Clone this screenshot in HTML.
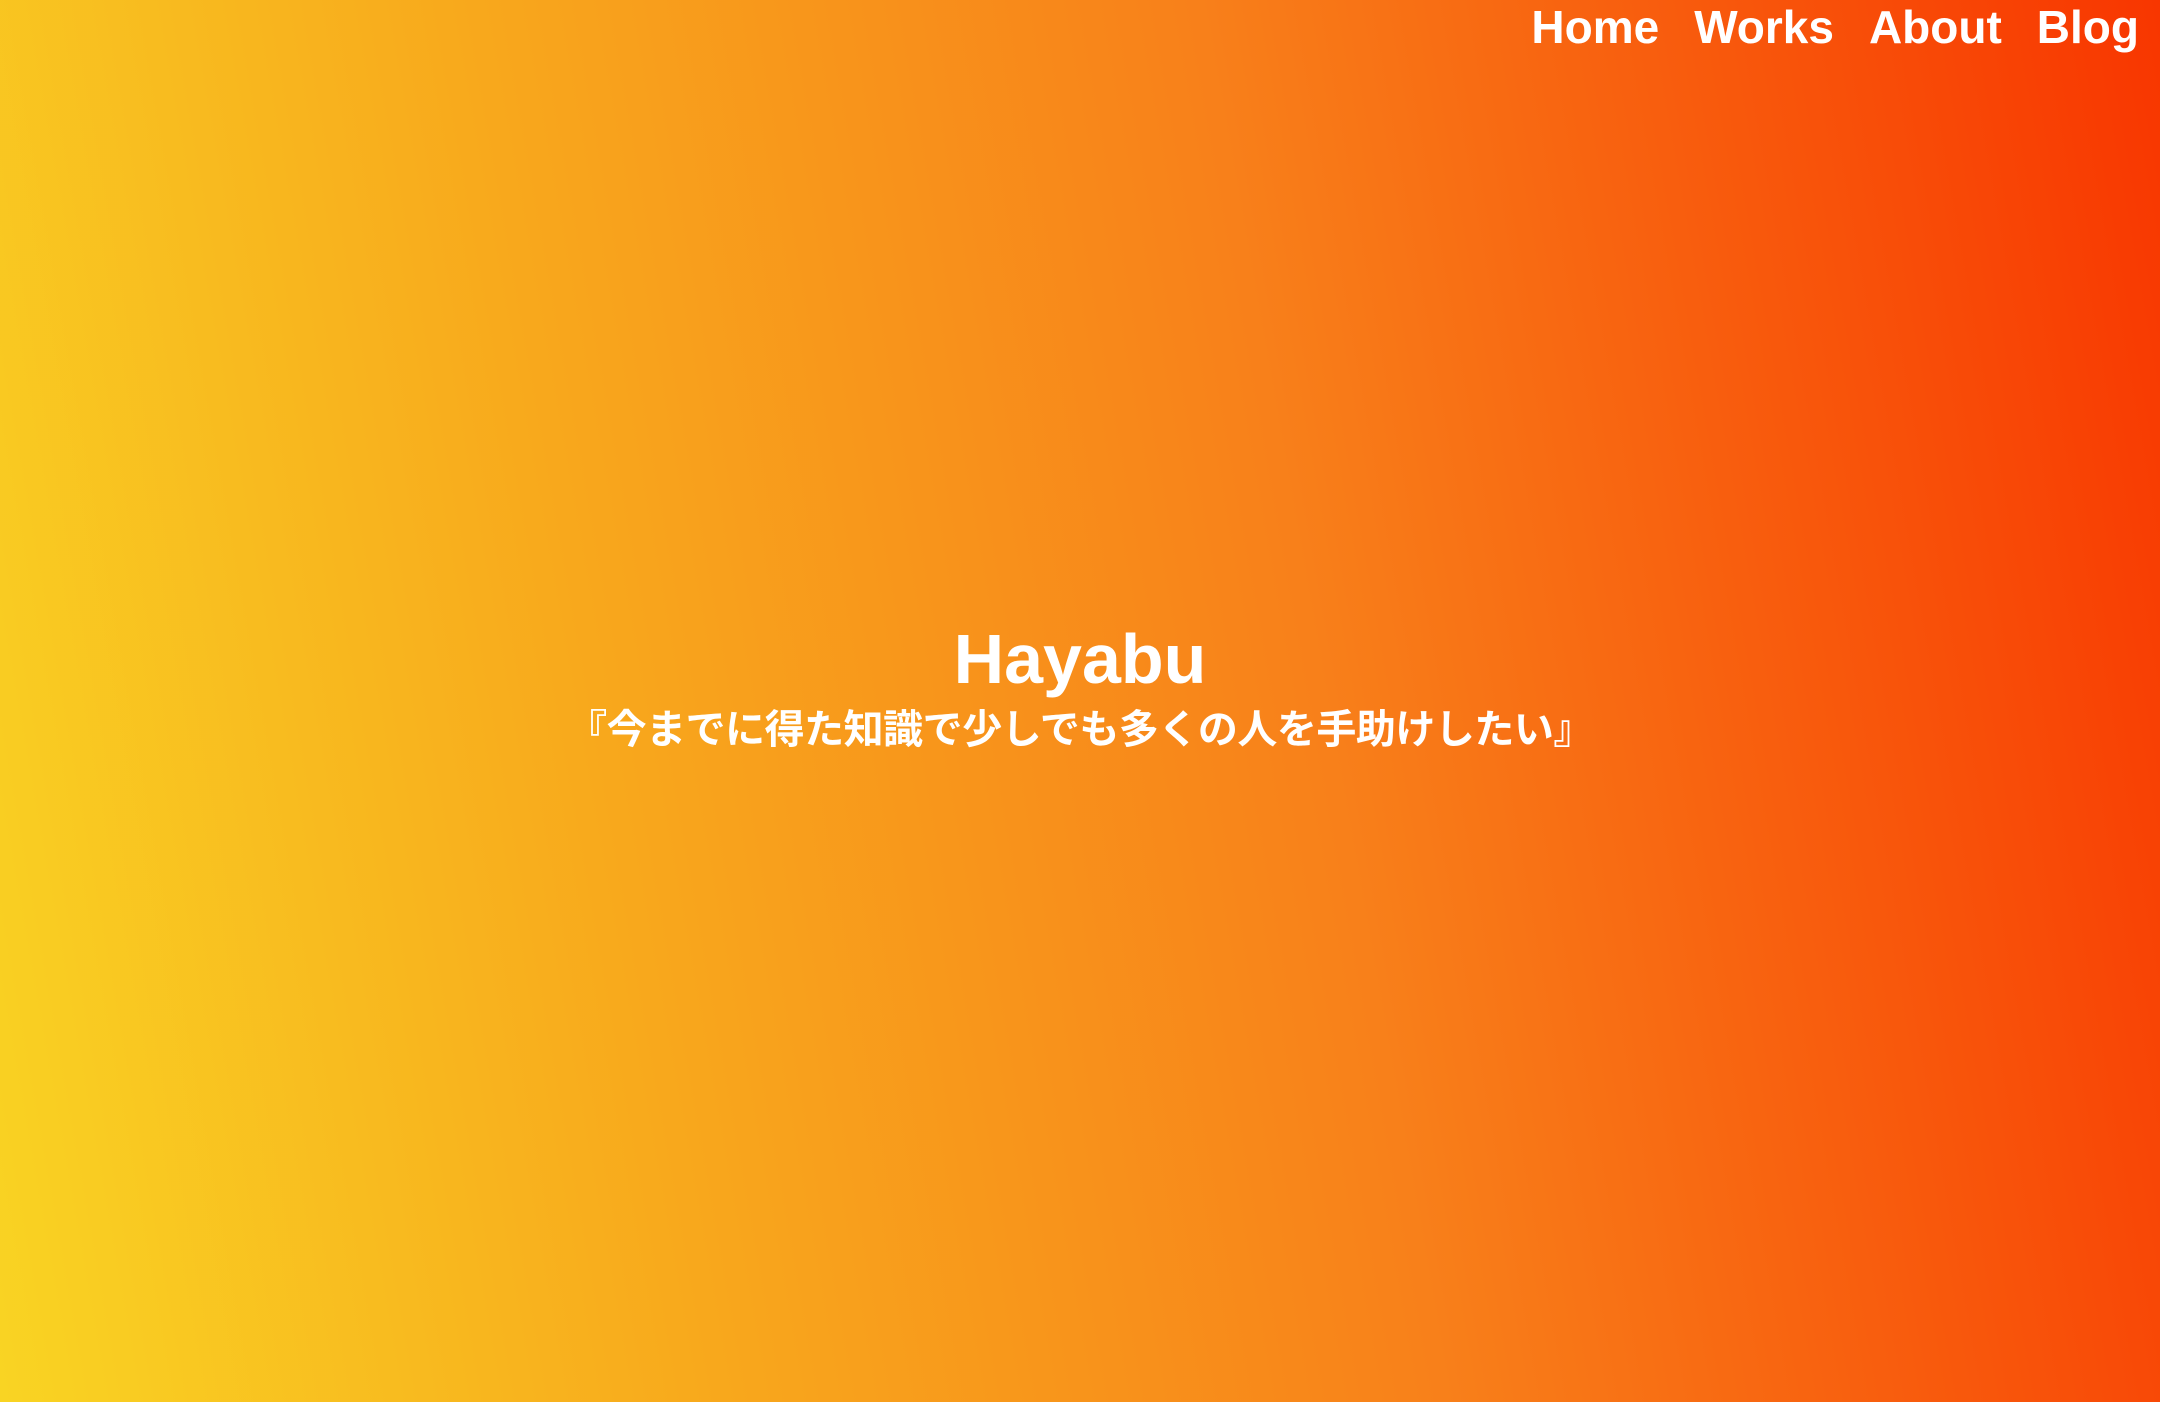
<!DOCTYPE html>
<html><head><meta charset="utf-8"><style>
html,body{margin:0;padding:0;width:2160px;height:1402px;overflow:hidden}
body{background:linear-gradient(80deg,#f9d423 0%,#f8a81c 30%,#f8801a 60%,#f83600 100%);font-family:"Liberation Sans","Noto Sans CJK JP",sans-serif;color:#fff;position:relative}
nav{position:absolute;right:21px;top:0px;font-weight:bold;font-size:46px;white-space:nowrap}
nav span{margin-left:35px}
h1{position:absolute;left:0;right:0;top:614px;margin:0;text-align:center;font-size:70px;font-weight:bold;line-height:90px}
p{position:absolute;left:0;right:0;top:702px;margin:0;text-align:center;font-size:40px;font-weight:bold;line-height:56px;letter-spacing:-0.5px}
</style></head><body>
<nav><span>Home</span><span>Works</span><span>About</span><span>Blog</span></nav>
<h1>Hayabu</h1>
<p>『今までに得た知識で少しでも多くの人を手助けしたい』</p>
</body></html>
